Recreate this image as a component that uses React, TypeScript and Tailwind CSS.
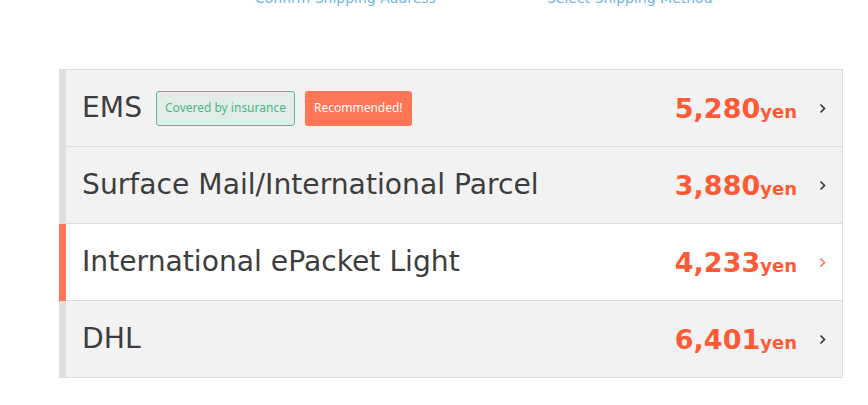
import React from 'react';

interface ShippingOption {
  id: string;
  name: string;
  price: string;
  selected?: boolean;
  insured?: boolean;
  recommended?: boolean;
}

const options: ShippingOption[] = [
  { id: 'ems', name: 'EMS', price: '5,280', insured: true, recommended: true },
  { id: 'surface', name: 'Surface Mail/International Parcel', price: '3,880' },
  { id: 'epacket', name: 'International ePacket Light', price: '4,233', selected: true },
  { id: 'dhl', name: 'DHL', price: '6,401' },
];

function Chevron({ active }: { active?: boolean }) {
  return (
    <svg width="7" height="11" viewBox="0 0 7 11" className={active ? 'text-[#ff7656]' : 'text-[#333]'}>
      <path d="M1.5 1.5 L5.5 5.5 L1.5 9.5" fill="none" stroke="currentColor" strokeWidth="1.6" />
    </svg>
  );
}

function OptionRow({ option }: { option: ShippingOption }) {
  return (
    <div className="flex">
      <div className={`w-[7px] shrink-0 ${option.selected ? 'bg-[#ff7656]' : 'bg-[#dedede]'}`}></div>
      <div
        className={`flex-1 h-[77px] flex items-center border-b border-r border-[#dcdcdc] pl-[16px] pr-[16px] ${
          option.selected ? 'bg-white' : 'bg-[#f2f2f2]'
        }`}
      >
        <span className="text-[28.2px] text-[#3d3d3d] leading-none">{option.name}</span>
        {option.insured && (
          <span
            className="ml-[14px] h-[35px] px-[8px] flex items-center rounded-[3px] border border-[#5cb894] bg-[#e3ede8] text-[12px] text-[#4fb38b]"
            style={{ fontFamily: '"Noto Sans", sans-serif' }}
          >
            Covered by insurance
          </span>
        )}
        {option.recommended && (
          <span
            className="ml-[10px] h-[35px] px-[9px] flex items-center rounded-[3px] bg-[#ff7656] text-[12px] text-white"
            style={{ fontFamily: '"Noto Sans", sans-serif' }}
          >
            Recommended!
          </span>
        )}
        <div className="ml-auto flex items-baseline text-[#ff5a36] font-bold">
          <span className="text-[27px] leading-none">{option.price}</span>
          <span className="text-[18px] leading-none">yen</span>
        </div>
        <div className="ml-[22px] flex items-center">
          <Chevron active={option.selected} />
        </div>
      </div>
    </div>
  );
}

export default function App() {
  return (
    <div className="w-[868px] h-[405px] bg-white overflow-hidden" style={{ fontFamily: '"DejaVu Sans", sans-serif' }}>
      <div className="flex -mt-[12px] h-[20px] text-[14px] text-[#6cb7df] leading-[20px]">
        <span className="ml-[255px]">Confirm Shipping Address</span>
        <span className="ml-[111px]">Select Shipping Method</span>
      </div>
      <div className="ml-[59px] mt-[61px] w-[784px] border-t border-[#dcdcdc]">
        {options.map((option) => (
          <OptionRow key={option.id} option={option} />
        ))}
      </div>
    </div>
  );
}
